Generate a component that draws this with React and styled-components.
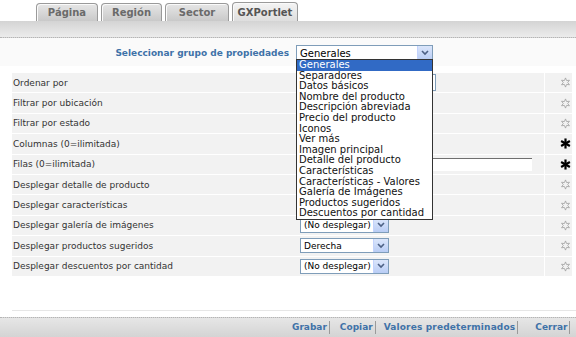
import React from "react";
import styled, { createGlobalStyle } from "styled-components";

const GlobalStyle = createGlobalStyle`
  html, body {
    margin: 0;
    padding: 0;
    background: #ffffff;
  }
  body {
    font-family: "DejaVu Sans", Verdana, sans-serif;
    width: 576px;
    height: 337px;
    overflow: hidden;
  }
`;

const Page = styled.div`
  position: relative;
  width: 576px;
  height: 337px;
  display: flex;
  flex-direction: column;
`;

const TabStrip = styled.div`
  display: flex;
  align-items: flex-end;
  gap: 3px;
  height: 21px;
  padding-left: 36px;
  box-sizing: border-box;
`;

const Tab = styled.div`
  width: ${p => p.$w}px;
  height: ${p => (p.$active ? 19 : 18)}px;
  box-sizing: border-box;
  border: 1px solid #9a9a9a;
  border-bottom: none;
  border-radius: 4px 4px 0 0;
  background: ${p => (p.$active
    ? "linear-gradient(#f4f4f4, #dedede)"
    : "linear-gradient(#e6e6e6, #c9c9c9)")};
  color: ${p => (p.$active ? "#555" : "#6a6a6a")};
  font-size: 10px;
  font-weight: bold;
  display: flex;
  align-items: center;
  justify-content: center;
  box-shadow: inset 1px 1px 0 #fafafa;
`;

const HeaderBand = styled.div`
  height: 16px;
  background: linear-gradient(#d4d4d4, #ececec);
  border-bottom: 1px dotted #b5b5b5;
`;

const SelectorRow = styled.div`
  display: flex;
  align-items: center;
  height: 28px;
  padding-top: 2px;
  box-sizing: border-box;
  background: #fafafa;
`;

const SelectorLabel = styled.div`
  width: 289px;
  text-align: right;
  font-size: 9px;
  font-weight: bold;
  color: #3f72a8;
`;

const SelectBox = styled.div`
  width: ${p => p.$w}px;
  height: ${p => p.$h || 16}px;
  box-sizing: border-box;
  border: 1px solid #7f9db9;
  background: #fff;
  display: flex;
  align-items: center;
  justify-content: space-between;
  padding-left: 3px;
  font-size: ${p => p.$fs || 10}px;
  color: #000;
  white-space: nowrap;
  overflow: hidden;
`;

const Arrow = styled.div`
  flex: none;
  width: 14px;
  height: 100%;
  background: linear-gradient(#dbe6fb, #b9cdf5);
  border-left: 1px solid #c3d3fd;
  display: flex;
  align-items: center;
  justify-content: center;
`;

const SelectorGap = styled.div`
  width: 7px;
`;

const Table = styled.div`
  margin: 6px 4px 0 12px;
  display: flex;
  flex-direction: column;
`;

const Row = styled.div`
  display: grid;
  grid-template-columns: 286px 246px 28px;
  height: 20.4px;
  box-sizing: border-box;
  border-top: 1px solid #ffffff;
  background: #f2f2f2;
`;

const LabelCell = styled.div`
  display: flex;
  align-items: center;
  padding-left: 1px;
  font-size: 9px;
  color: #333;
`;

const ValueCell = styled.div`
  display: flex;
  align-items: center;
  padding-left: 2px;
`;

const StarCell = styled.div`
  display: flex;
  align-items: center;
  border-left: 1px solid #ffffff;
  padding-left: 15px;
`;

const TextInput = styled.div`
  width: ${p => p.$w}px;
  height: 13px;
  box-sizing: border-box;
  background: #fff;
  border-top: 1px solid #6f6f6f;
`;

const Popup = styled.div`
  position: absolute;
  left: 296px;
  top: 59px;
  width: 137px;
  box-sizing: border-box;
  border: 1px solid #333;
  background: #fff;
  font-size: 10px;
`;

const Option = styled.div`
  height: 10.6px;
  line-height: 10.6px;
  padding-left: 2px;
  white-space: nowrap;
  color: ${p => (p.$sel ? "#fff" : "#111")};
  background: ${p => (p.$sel ? "#316ac5" : "transparent")};
`;

const Spacer = styled.div`
  flex: 1;
`;

const FooterRule = styled.div`
  margin-left: 12px;
  height: 6px;
  border-top: 1px solid #e6e6e6;
`;

const FooterBand = styled.div`
  height: 19px;
  border-top: 1px dotted #b5b5b5;
  background: linear-gradient(#e6e6e6, #d4d4d4);
  display: flex;
  align-items: center;
  padding-left: 292px;
`;

const FooterLink = styled.span`
  font-size: 9px;
  font-weight: bold;
  color: #3f72a8;
  padding-right: 2px;
  border-right: 1px solid #9a9a9a;
  margin-right: ${p => p.$mr}px;
  line-height: 13px;
  letter-spacing: ${p => p.$ls || 0}px;
`;

const Star = ({ filled }) => (
  <svg width="11" height="11" viewBox="0 0 12 12">
    {filled ? (
      <g stroke="#000" strokeWidth="2.4" strokeLinecap="butt">
        <line x1="6" y1="0.5" x2="6" y2="11.5" />
        <line x1="1.2" y1="3.2" x2="10.8" y2="8.8" />
        <line x1="1.2" y1="8.8" x2="10.8" y2="3.2" />
      </g>
    ) : (
      <polygon
        points="6,1 7.2,3.9 10.3,3.5 8.4,6 10.3,8.5 7.2,8.1 6,11 4.8,8.1 1.7,8.5 3.6,6 1.7,3.5 4.8,3.9"
        fill="none"
        stroke="#a0a0a0"
        strokeWidth="0.9"
      />
    )}
  </svg>
);

const Chevron = () => (
  <svg width="8" height="6" viewBox="0 0 8 6">
    <path d="M1 1 L4 4 L7 1" fill="none" stroke="#4d6185" strokeWidth="1.6" />
  </svg>
);

const Select = ({ w, value }) => (
  <SelectBox $w={w} $h={15} $fs={9}>
    <span>{value}</span>
    <Arrow><Chevron /></Arrow>
  </SelectBox>
);

const options = [
  "Generales",
  "Separadores",
  "Datos básicos",
  "Nombre del producto",
  "Descripción abreviada",
  "Precio del producto",
  "Iconos",
  "Ver más",
  "Imagen principal",
  "Detalle del producto",
  "Características",
  "Características - Valores",
  "Galería de Imágenes",
  "Productos sugeridos",
  "Descuentos por cantidad",
];

const rows = [
  { label: "Ordenar por", field: <SelectBox $w={136} $h={17} /> },
  { label: "Filtrar por ubicación", field: <Select w={120} value="" /> },
  { label: "Filtrar por estado", field: <Select w={120} value="" /> },
  { label: "Columnas (0=ilimitada)", field: <TextInput $w={40} />, req: true },
  { label: "Filas (0=ilimitada)", field: <TextInput $w={232} />, req: true },
  { label: "Desplegar detalle de producto", field: <Select w={89} value="" /> },
  { label: "Desplegar características", field: <Select w={89} value="" /> },
  { label: "Desplegar galería de imágenes", field: <Select w={89} value="(No desplegar)" /> },
  { label: "Desplegar productos sugeridos", field: <Select w={89} value="Derecha" /> },
  { label: "Desplegar descuentos por cantidad", field: <Select w={89} value="(No desplegar)" /> },
];

export default function App() {
  return (
    <>
      <GlobalStyle />
      <Page>
        <TabStrip>
          <Tab $w={62}>Página</Tab>
          <Tab $w={61}>Región</Tab>
          <Tab $w={64}>Sector</Tab>
          <Tab $w={66} $active>GXPortlet</Tab>
        </TabStrip>
        <HeaderBand />
        <SelectorRow>
          <SelectorLabel>Seleccionar grupo de propiedades</SelectorLabel>
          <SelectorGap />
          <SelectBox $w={137}>
            <span>Generales</span>
            <Arrow><Chevron /></Arrow>
          </SelectBox>
        </SelectorRow>
        <Table>
          {rows.map(r => (
            <Row key={r.label}>
              <LabelCell>{r.label}</LabelCell>
              <ValueCell>{r.field}</ValueCell>
              <StarCell><Star filled={r.req} /></StarCell>
            </Row>
          ))}
        </Table>
        <Spacer />
        <FooterRule />
        <FooterBand>
          <FooterLink $mr={10}>Grabar</FooterLink>
          <FooterLink $mr={8}>Copiar</FooterLink>
          <FooterLink $mr={17} $ls={0.15}>Valores predeterminados</FooterLink>
          <FooterLink $mr={0}>Cerrar</FooterLink>
        </FooterBand>
        <Popup>
          {options.map((o, i) => (
            <Option key={o} $sel={i === 0}>{o}</Option>
          ))}
        </Popup>
      </Page>
    </>
  );
}
